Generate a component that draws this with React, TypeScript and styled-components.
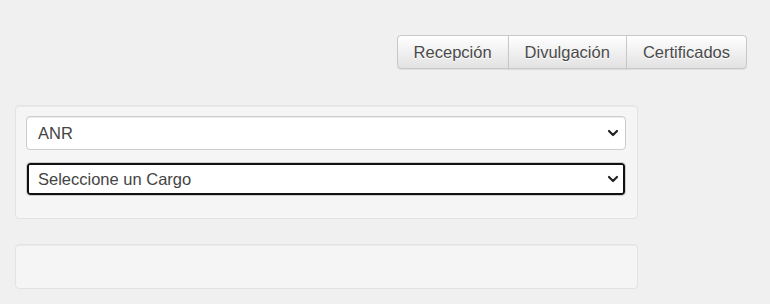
import styled, { createGlobalStyle } from "styled-components";

const GlobalStyle = createGlobalStyle`
  html, body {
    margin: 0;
    padding: 0;
    background: #f0f0f0;
    font-family: "Liberation Sans", Arial, sans-serif;
    color: #555;
  }
  * {
    box-sizing: border-box;
  }
`;

const StyledPage = styled.div`
  width: 770px;
  height: 304px;
  padding-top: 35px;
  overflow: hidden;
`;

const StyledToolbar = styled.div`
  display: flex;
  justify-content: flex-end;
  padding-right: 23px;
`;

const StyledButtonGroup = styled.div`
  display: flex;
`;

const StyledButton = styled.button<{ $first?: boolean; $last?: boolean }>`
  height: 34px;
  padding: 0 16px;
  margin-left: ${(props) => (props.$first ? "0" : "-1px")};
  font-family: "Liberation Sans", Arial, sans-serif;
  font-size: 16.5px;
  color: #4a4a4a;
  text-shadow: 0 1px 0 #fff;
  background: linear-gradient(to bottom, #ffffff 0%, #e2e2e2 100%);
  border: 1px solid #c8c8c8;
  border-radius: ${(props) =>
    props.$first ? "4px 0 0 4px" : props.$last ? "0 4px 4px 0" : "0"};
  box-shadow: inset 0 1px 0 rgba(255, 255, 255, 0.15),
    0 1px 1px rgba(0, 0, 0, 0.075);
  cursor: pointer;
`;

const StyledWell = styled.div<{ $height?: number }>`
  width: 623px;
  margin-left: 15px;
  padding: 10px;
  background: #f5f5f5;
  border: 1px solid #e3e3e3;
  border-radius: 4px;
  box-shadow: inset 0 1px 1px rgba(0, 0, 0, 0.05);
  min-height: ${(props) => (props.$height ? `${props.$height}px` : "0")};
`;

const StyledFormWell = styled(StyledWell)`
  margin-top: 36px;
  padding-bottom: 10px;
`;

const StyledEmptyWell = styled(StyledWell)`
  margin-top: 25px;
`;

const StyledField = styled.div`
  position: relative;
  margin-bottom: 12px;
`;

const StyledSelect = styled.select<{ $focused?: boolean }>`
  display: block;
  width: 600px;
  height: 34px;
  padding: 0 36px 0 11px;
  appearance: none;
  font-family: "Liberation Sans", Arial, sans-serif;
  font-size: 16.5px;
  color: #444;
  background: #fff;
  border: 1px solid #ccc;
  border-radius: 4px;
  box-shadow: ${(props) =>
    props.$focused ? "inset 0 0 0 2px #111" : "inset 0 1px 1px rgba(0,0,0,.075)"};
  outline: none;
`;

const StyledChevron = styled.svg`
  position: absolute;
  right: 8px;
  top: 50%;
  margin-top: -4px;
  pointer-events: none;
`;

const Chevron = () => (
  <StyledChevron width="12" height="8" viewBox="0 0 12 8">
    <path
      d="M2 2 L6 6 L10 2"
      fill="none"
      stroke="#222"
      strokeWidth="2.2"
      strokeLinecap="round"
      strokeLinejoin="round"
    />
  </StyledChevron>
);

export default function App() {
  return (
    <StyledPage>
      <GlobalStyle />
      <StyledToolbar>
        <StyledButtonGroup>
          <StyledButton $first>Recepción</StyledButton>
          <StyledButton>Divulgación</StyledButton>
          <StyledButton $last>Certificados</StyledButton>
        </StyledButtonGroup>
      </StyledToolbar>
      <StyledFormWell>
        <StyledField>
          <StyledSelect defaultValue="anr">
            <option value="anr">ANR</option>
          </StyledSelect>
          <Chevron />
        </StyledField>
        <StyledField>
          <StyledSelect $focused defaultValue="">
            <option value="">Seleccione un Cargo</option>
          </StyledSelect>
          <Chevron />
        </StyledField>
      </StyledFormWell>
      <StyledEmptyWell $height={45} />
    </StyledPage>
  );
}
